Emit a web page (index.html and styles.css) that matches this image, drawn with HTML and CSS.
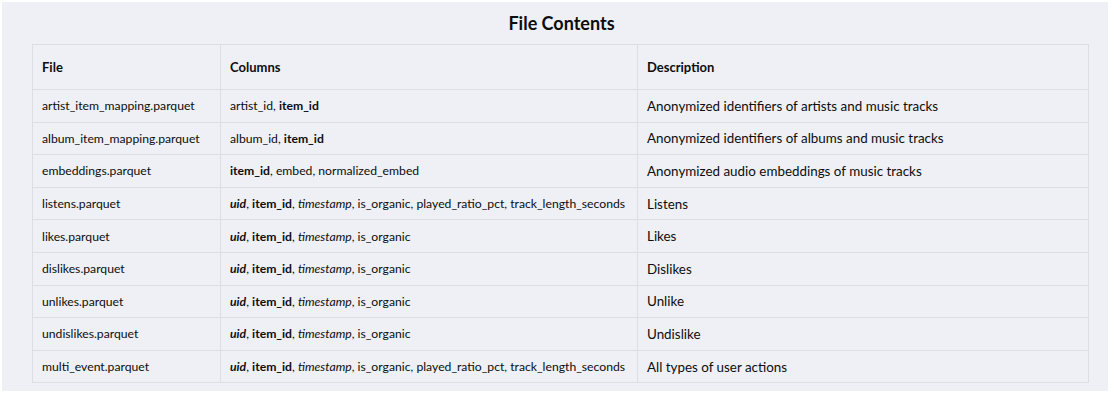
FILE: index.html
```html
<!DOCTYPE html>
<html lang="en">
<head>
  <meta charset="UTF-8" />
  <title>File Contents</title>
  <link rel="stylesheet" href="styles.css">
</head>
<body>

<div class="panel">
  <h2>File Contents</h2>
  <table class="files">
    <colgroup>
      <col class="col-file">
      <col class="col-columns">
      <col class="col-desc">
    </colgroup>
    <thead>
      <tr>
        <th>File</th>
        <th>Columns</th>
        <th>Description</th>
      </tr>
    </thead>
    <tbody>
      <tr>
        <td>artist_item_mapping.parquet</td>
        <td>artist_id, <b>item_id</b></td>
        <td class="desc">Anonymized identifiers of artists and music tracks</td>
      </tr>
      <tr>
        <td>album_item_mapping.parquet</td>
        <td>album_id, <b>item_id</b></td>
        <td class="desc">Anonymized identifiers of albums and music tracks</td>
      </tr>
      <tr>
        <td>embeddings.parquet</td>
        <td><b>item_id</b>, embed, normalized_embed</td>
        <td class="desc">Anonymized audio embeddings of music tracks</td>
      </tr>
      <tr>
        <td>listens.parquet</td>
        <td><b><i>uid</i></b>, <b>item_id</b>, <i>timestamp</i>, is_organic, played_ratio_pct, track_length_seconds</td>
        <td class="desc">Listens</td>
      </tr>
      <tr>
        <td>likes.parquet</td>
        <td><b><i>uid</i></b>, <b>item_id</b>, <i>timestamp</i>, is_organic</td>
        <td class="desc">Likes</td>
      </tr>
      <tr>
        <td>dislikes.parquet</td>
        <td><b><i>uid</i></b>, <b>item_id</b>, <i>timestamp</i>, is_organic</td>
        <td class="desc">Dislikes</td>
      </tr>
      <tr>
        <td>unlikes.parquet</td>
        <td><b><i>uid</i></b>, <b>item_id</b>, <i>timestamp</i>, is_organic</td>
        <td class="desc">Unlike</td>
      </tr>
      <tr>
        <td>undislikes.parquet</td>
        <td><b><i>uid</i></b>, <b>item_id</b>, <i>timestamp</i>, is_organic</td>
        <td class="desc">Undislike</td>
      </tr>
      <tr>
        <td>multi_event.parquet</td>
        <td><b><i>uid</i></b>, <b>item_id</b>, <i>timestamp</i>, is_organic, played_ratio_pct, track_length_seconds</td>
        <td class="desc">All types of user actions</td>
      </tr>
    </tbody>
  </table>
</div>

</body>
</html>
```

FILE: styles.css
```css
* { margin: 0; padding: 0; box-sizing: border-box; }

body {
  font-family: Lato, 'Noto Sans', sans-serif;
  background: #ffffff;
  color: #0d0d0d;
  padding: 2px 12px 5px 2px;
}

.panel {
  background: #eff0f5;
  padding: 10px 21px 8px 30px;
  height: 389px;
}

.panel h2 {
  text-align: center;
  font-size: 18px;
  font-weight: 700;
  line-height: 22px;
  margin-bottom: 10px;
  padding-left: 4px;
}

.files {
  width: 1056px;
  table-layout: fixed;
  border-collapse: collapse;
  background: #eef0f5;
}

.col-file { width: 188px; }
.col-columns { width: 417px; }
.col-desc { width: 451px; }

.files th,
.files td {
  border: 1px solid #dcdee4;
  text-align: left;
  padding: 0 9px;
  white-space: nowrap;
}

.files th {
  height: 45px;
  font-size: 13px;
  font-weight: 700;
}

.files td {
  height: 32.6px;
  font-size: 12.2px;
}

.files td.desc {
  font-size: 13.4px;
}
```
